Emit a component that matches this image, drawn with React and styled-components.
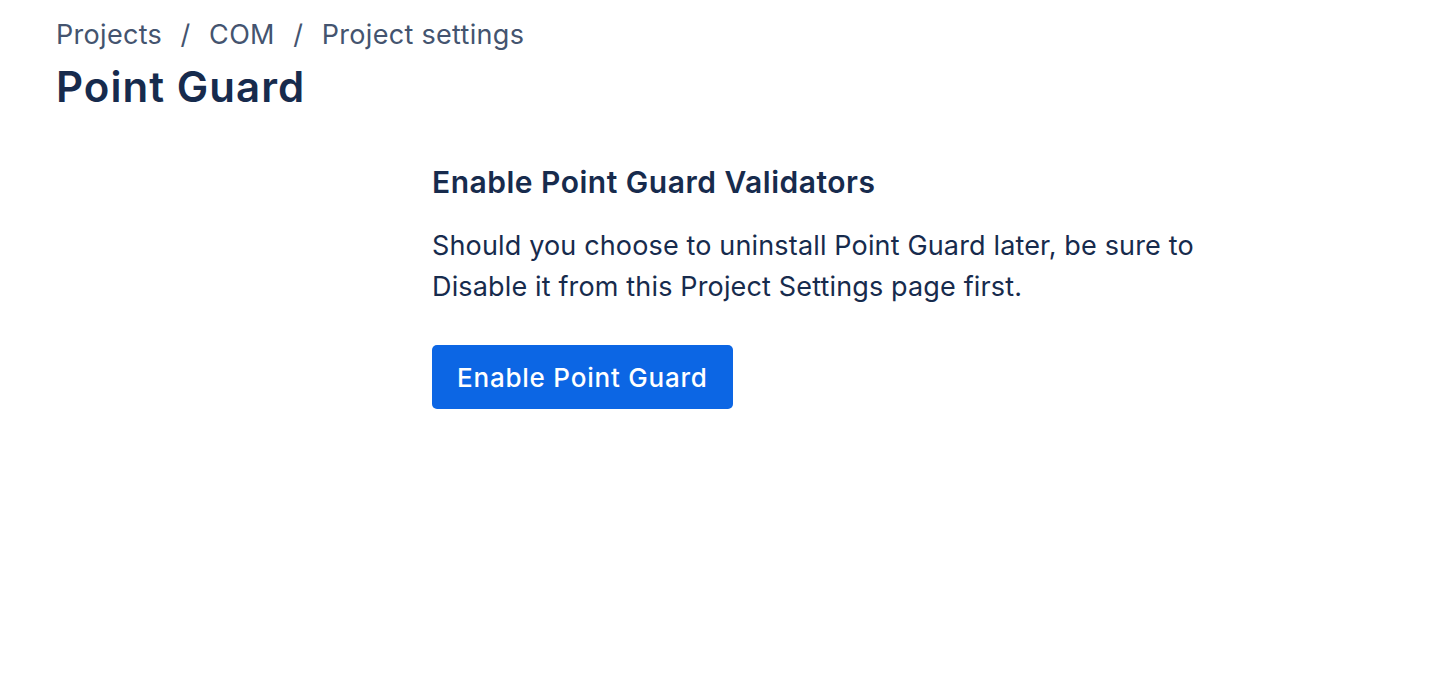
import React from 'react';
import styled, { createGlobalStyle } from 'styled-components';

const GlobalStyle = createGlobalStyle`
  body {
    margin: 0;
    background: #ffffff;
    font-family: Inter, "Noto Sans", "Liberation Sans", sans-serif;
    color: #172b4d;
  }
`;

export default function App() {
  return (
    <>
      <GlobalStyle />
      <Page>
        <Breadcrumbs>
          <Crumb>Projects</Crumb>
          <Separator>/</Separator>
          <Crumb>COM</Crumb>
          <Separator>/</Separator>
          <Crumb>Project settings</Crumb>
        </Breadcrumbs>
        <Title>Point Guard</Title>
        <Content>
          <SectionTitle>Enable Point Guard Validators</SectionTitle>
          <Description>
            Should you choose to uninstall Point Guard later, be sure to
            <br />
            Disable it from this Project Settings page first.
          </Description>
          <PrimaryButton>Enable Point Guard</PrimaryButton>
        </Content>
      </Page>
    </>
  );
}

const Page = styled.div`
  padding: 16px 56px 0;
`;

const Breadcrumbs = styled.nav`
  display: flex;
  align-items: center;
  height: 36px;
  font-size: 27px;
  letter-spacing: 0.3px;
  color: #44546f;
`;

const Crumb = styled.span``;

const Separator = styled.span`
  padding: 0 18.5px;
`;

const Title = styled.h1`
  margin: 9px 0 0;
  font-size: 42px;
  font-weight: 600;
  line-height: 52px;
  letter-spacing: 1.05px;
  color: #172b4d;
`;

const Content = styled.div`
  display: flex;
  flex-direction: column;
  align-items: flex-start;
  margin: 49px 0 0 376px;
`;

const SectionTitle = styled.h2`
  margin: 0;
  font-size: 30px;
  font-weight: 600;
  line-height: 40px;
  letter-spacing: 0.5px;
`;

const Description = styled.p`
  margin: 23px 0 0;
  font-size: 27px;
  line-height: 41px;
  letter-spacing: 0.15px;
`;

const PrimaryButton = styled.button`
  margin-top: 38px;
  height: 64px;
  padding: 0 25px;
  border: none;
  border-radius: 5px;
  background: #0c66e4;
  color: #ffffff;
  font-family: inherit;
  font-size: 26px;
  font-weight: 500;
  letter-spacing: 0.78px;
  cursor: pointer;
`;
